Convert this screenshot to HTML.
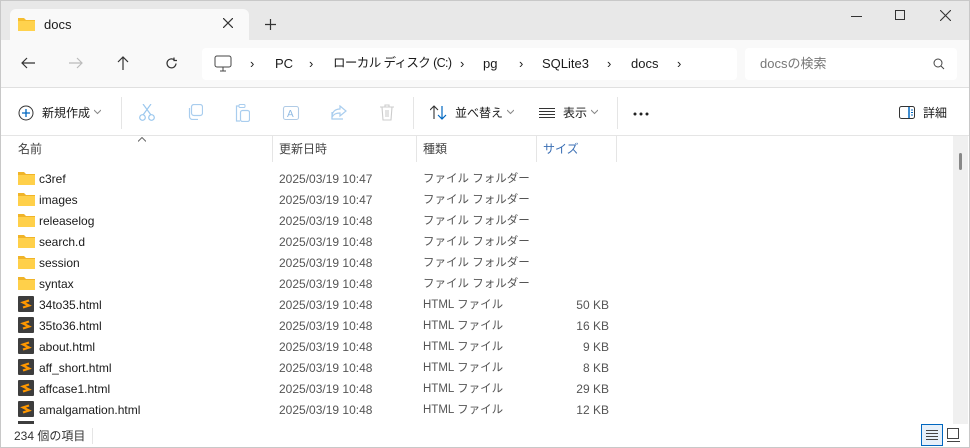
<!DOCTYPE html>
<html><head><meta charset="utf-8"><style>
*{margin:0;padding:0;box-sizing:border-box}
body{width:970px;height:448px;overflow:hidden;background:#fff;font-family:"Liberation Sans","Noto Sans CJK JP",sans-serif;font-size:12px;line-height:15px;color:#1a1a1a;position:relative}
.frame{position:absolute;left:0;top:0;width:970px;height:448px;border:1px solid #c8c8c8;pointer-events:none;z-index:9}
.a{position:absolute}
.title{left:0;top:0;width:970px;height:40px;background:#e8e8e8}
.tab{left:10px;top:9px;width:239px;height:32px;background:#f9f9f9;border-radius:6px 6px 0 0}
.nav{left:0;top:40px;width:970px;height:48px;background:#f9f9f9;border-bottom:1px solid #e0e0e0}
.box{background:#fff;border-radius:4px}
.t{position:absolute;white-space:nowrap}
.hdr{color:#444}
.sep{position:absolute;width:1px;background:#e5e5e5}
.row{position:absolute;left:0;height:21px;width:950px}
.row span{position:absolute;top:3px;white-space:nowrap;line-height:15px}
.d{left:279px;color:#555}
.k{left:423px;color:#555;font-size:11.5px}
.s{right:341px;color:#555}
.ch{display:inline-block;width:7px;height:7px;margin-left:4px;vertical-align:2px}
</style></head><body>
<div class="a title"></div>
<div class="a tab"></div>
<svg class="a" style="left:18px;top:17px" width="17" height="14"><path d="M0 1h6l2 2h9v11H0z" fill="#f5bd2f"/><path d="M0 4h17v10H0z" fill="#ffd24d"/></svg>
<div class="t" style="left:44px;top:17px;font-size:13px">docs</div>
<svg class="a" style="left:223px;top:18px" width="10" height="10"><path d="M0 0l10 10M10 0L0 10" stroke="#333" stroke-width="1.2"/></svg>
<svg class="a" style="left:265px;top:19px" width="11" height="11"><path d="M5.5 0v11M0 5.5h11" stroke="#333" stroke-width="1.2"/></svg>
<div class="a" style="left:851px;top:16px;width:11px;height:1px;background:#333"></div>
<div class="a" style="left:895px;top:10px;width:10px;height:10px;border:1px solid #333"></div>
<svg class="a" style="left:940px;top:10px" width="11" height="11"><path d="M0 0l11 11M11 0L0 11" stroke="#333" stroke-width="1.1"/></svg>
<div class="a nav"></div>
<svg class="a" style="left:21px;top:57px" width="14" height="12"><path d="M14 6H1M6 1L1 6l5 5" fill="none" stroke="#333" stroke-width="1.2"/></svg>
<svg class="a" style="left:69px;top:57px" width="14" height="12"><path d="M0 6h13M8 1l5 5-5 5" fill="none" stroke="#bbb" stroke-width="1.2"/></svg>
<svg class="a" style="left:117px;top:56px" width="12" height="14"><path d="M6 14V1M1 6l5-5 5 5" fill="none" stroke="#333" stroke-width="1.2"/></svg>
<svg class="a" style="left:165px;top:57px" width="13" height="13"><path d="M11 6.5A4.5 4.5 0 1 1 9.5 3M9 0.5v3h3" fill="none" stroke="#333" stroke-width="1.2"/></svg>
<div class="a box" style="left:202px;top:48px;width:535px;height:32px"></div>
<svg class="a" style="left:214px;top:55px" width="18" height="17"><rect x="1" y="1" width="16" height="11" rx="2" fill="none" stroke="#444"/><path d="M6 16h6M9 12v4" stroke="#444"/></svg>
<div class="t" style="left:250px;top:56px;font-size:13px">›</div>
<div class="t" style="left:275px;top:56px;font-size:13px">PC</div>
<div class="t" style="left:309px;top:56px;font-size:13px">›</div>
<div class="t" style="left:333px;top:56px;font-size:12.5px;letter-spacing:-0.6px">ローカル ディスク (C:)</div>
<div class="t" style="left:460px;top:56px;font-size:13px">›</div>
<div class="t" style="left:483px;top:56px;font-size:13px">pg</div>
<div class="t" style="left:519px;top:56px;font-size:13px">›</div>
<div class="t" style="left:542px;top:56px;font-size:13px">SQLite3</div>
<div class="t" style="left:607px;top:56px;font-size:13px">›</div>
<div class="t" style="left:631px;top:56px;font-size:13px">docs</div>
<div class="t" style="left:677px;top:56px;font-size:13px">›</div>
<div class="a box" style="left:745px;top:48px;width:212px;height:32px"></div>
<div class="t" style="left:760px;top:56px;font-size:13px;color:#777">docsの検索</div>
<svg class="a" style="left:933px;top:58px" width="12" height="12"><circle cx="5" cy="5" r="4" fill="none" stroke="#444"/><path d="M8 8l3 3" stroke="#444"/></svg>
<svg class="a" style="left:18px;top:105px" width="16" height="16"><circle cx="8" cy="8" r="7" fill="none" stroke="#333"/><path d="M8 4v8M4 8h8" stroke="#0067c0" stroke-width="1.3"/></svg>
<div class="t" style="left:42px;top:106px">新規作成<svg class="ch" viewBox="0 0 7 7"><path d="M0 2l3.5 3.5L7 2" fill="none" stroke="#888"/></svg></div>
<div class="sep" style="left:121px;top:97px;height:32px"></div>
<svg class="a" style="left:139px;top:104px" width="16" height="17"><path d="M4 0l8 11M12 0L4 11" stroke="#9cc8ee" stroke-width="1.2"/><circle cx="3.5" cy="13.5" r="2.8" fill="none" stroke="#9cc8ee" stroke-width="1.2"/><circle cx="12.5" cy="13.5" r="2.8" fill="none" stroke="#9cc8ee" stroke-width="1.2"/></svg>
<svg class="a" style="left:187px;top:104px" width="16" height="16"><rect x="4.5" y="0.5" width="11" height="11" rx="2.5" fill="none" stroke="#a9cdee" stroke-width="1.2"/><path d="M2.5 4v8.5a3 3 0 0 0 3 3H11" fill="none" stroke="#a9cdee" stroke-width="1.2"/></svg>
<svg class="a" style="left:235px;top:104px" width="15" height="18"><path d="M4 2H1.5v15H5" fill="none" stroke="#a9cdee" stroke-width="1.2"/><rect x="4" y="0.5" width="6" height="3" rx="1" fill="none" stroke="#a9cdee"/><rect x="5.5" y="6.5" width="9" height="11" rx="2" fill="none" stroke="#a9cdee" stroke-width="1.2"/></svg>
<svg class="a" style="left:282px;top:104px" width="18" height="18"><rect x="1.5" y="2.5" width="15" height="13" rx="2" fill="none" stroke="#b0cbe6" stroke-width="1.1"/><text x="5" y="13" font-size="10" fill="#8db8e2" font-family="Liberation Sans">A</text></svg>
<svg class="a" style="left:331px;top:105px" width="16" height="15"><path d="M9 1l6 5-6 5V8C5 8 3 9 1 12c0-5 3-8 8-8z" fill="none" stroke="#a9cdee" stroke-width="1.2"/><path d="M1 7v7h11" fill="none" stroke="#a9cdee" stroke-width="1.2"/></svg>
<svg class="a" style="left:379px;top:104px" width="16" height="17"><path d="M1 3h14M6 3V1h4v2M3 3l1 13h8l1-13M7 6v7M9 6v7" fill="none" stroke="#ccc" stroke-width="1.1"/></svg>
<div class="sep" style="left:413px;top:97px;height:32px"></div>
<svg class="a" style="left:430px;top:105px" width="17" height="15"><path d="M4 14V1M0 5l4-4 4 4" fill="none" stroke="#333" stroke-width="1.1"/><path d="M12 1v13M8 10l4 4 4-4" fill="none" stroke="#0067c0" stroke-width="1.2"/></svg>
<div class="t" style="left:455px;top:106px">並べ替え<svg class="ch" viewBox="0 0 7 7"><path d="M0 2l3.5 3.5L7 2" fill="none" stroke="#888"/></svg></div>
<svg class="a" style="left:539px;top:108px" width="16" height="10"><path d="M0 .5h16M0 3.5h16M0 6.5h16M0 9.5h16" stroke="#333"/></svg>
<div class="t" style="left:563px;top:106px">表示<svg class="ch" viewBox="0 0 7 7"><path d="M0 2l3.5 3.5L7 2" fill="none" stroke="#888"/></svg></div>
<div class="sep" style="left:617px;top:97px;height:32px"></div>
<svg class="a" style="left:633px;top:112px" width="16" height="4"><circle cx="2" cy="2" r="1.5" fill="#222"/><circle cx="8" cy="2" r="1.5" fill="#222"/><circle cx="14" cy="2" r="1.5" fill="#222"/></svg>
<svg class="a" style="left:899px;top:106px" width="16" height="13"><rect x=".5" y=".5" width="15" height="12" rx="2" fill="none" stroke="#333"/><path d="M10 1v11" stroke="#0067c0" stroke-width="1.5"/><path d="M12 4h2M12 6.5h2M12 9h2" stroke="#0067c0"/></svg>
<div class="t" style="left:923px;top:106px">詳細</div>
<div class="a" style="left:0;top:135px;width:970px;height:1px;background:#e5e5e5"></div>
<svg class="a" style="left:138px;top:137px" width="8" height="5"><path d="M0 4.5l4-4 4 4" fill="none" stroke="#666"/></svg>
<div class="t hdr" style="left:18px;top:142px">名前</div>
<div class="sep" style="left:272px;top:136px;height:26px"></div>
<div class="t hdr" style="left:279px;top:142px">更新日時</div>
<div class="sep" style="left:416px;top:136px;height:26px"></div>
<div class="t hdr" style="left:423px;top:142px">種類</div>
<div class="sep" style="left:536px;top:136px;height:26px"></div>
<div class="t hdr" style="left:543px;top:142px;color:#3b6fb4">サイズ</div>
<div class="sep" style="left:616px;top:136px;height:26px"></div>
<div class="a" style="left:953px;top:136px;width:15px;height:288px;background:#f0f0f0"></div>
<div class="a" style="left:959px;top:153px;width:3px;height:17px;background:#888;border-radius:2px"></div>
<div id="rows"></div>
<script>
var f=[["c3ref","2025/03/19 10:47"],["images","2025/03/19 10:47"],["releaselog","2025/03/19 10:48"],["search.d","2025/03/19 10:48"],["session","2025/03/19 10:48"],["syntax","2025/03/19 10:48"]];
var h=[["34to35.html","50 KB"],["35to36.html","16 KB"],["about.html","9 KB"],["aff_short.html","8 KB"],["affcase1.html","29 KB"],["amalgamation.html","12 KB"]];
var o="",y=169;
f.forEach(function(r){o+='<div class="row" style="top:'+y+'px"><svg style="position:absolute;left:18px;top:2px" width="17" height="14"><path d="M0 1h6l2 2h9v11H0z" fill="#f0b429"/><path d="M0 4h17v10H0z" fill="#ffd04a"/></svg><span style="left:39px">'+r[0]+'</span><span class="d">'+r[1]+'</span><span class="k">ファイル フォルダー</span></div>';y+=21;});
h.forEach(function(r){o+='<div class="row" style="top:'+y+'px"><svg style="position:absolute;left:18px;top:1px" width="16" height="16"><rect width="16" height="16" rx="1" fill="#3d3d3d"/><path d="M11 4.5L5 6.5l6 3-6 2" fill="none" stroke="#ff9800" stroke-width="2.2"/></svg><span style="left:39px">'+r[0]+'</span><span class="d">2025/03/19 10:48</span><span class="k">HTML ファイル</span><span class="s">'+r[1]+'</span></div>';y+=21;});
o+='<div class="a" style="left:18px;top:421px;width:16px;height:3px;background:#3d3d3d"></div>';
document.getElementById("rows").innerHTML=o;
</script>
<div class="a" style="left:0;top:424px;width:970px;height:24px;background:#fff"></div>
<div class="t" style="left:14px;top:429px;color:#333">234 個の項目</div>
<div class="sep" style="left:92px;top:428px;height:16px"></div>
<div class="a" style="left:921px;top:424px;width:22px;height:22px;border:1px solid #0067c0;background:#e6f0fa"></div>
<svg class="a" style="left:926px;top:430px" width="12" height="10"><path d="M0 .5h12M0 3.5h12M0 6.5h12M0 9.5h12" stroke="#444"/></svg>
<svg class="a" style="left:947px;top:428px" width="13" height="14"><rect x=".5" y=".5" width="11" height="10" fill="none" stroke="#444"/><path d="M0 13.5h13" stroke="#444"/></svg>
<div class="frame"></div>
</body></html>
